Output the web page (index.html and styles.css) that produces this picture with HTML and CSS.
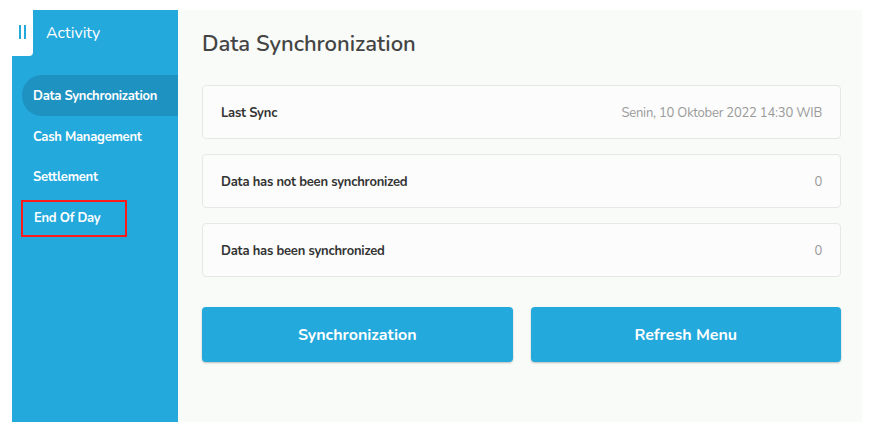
FILE: index.html
```html
<!DOCTYPE html>
<html>
<head>
<meta charset="utf-8">
<link rel="stylesheet" href="styles.css">
</head>
<body>
<div class="app">
  <aside class="sidebar">
    <div class="sidebar-head">
      <div class="toggle"><span class="bars"><i></i><i></i></span></div>
      <div class="brand">Activity</div>
    </div>
    <nav class="menu">
      <div class="item active">Data Synchronization</div>
      <div class="item">Cash Management</div>
      <div class="item">Settlement</div>
      <div class="item"><span class="highlight">End Of Day</span></div>
    </nav>
  </aside>
  <main class="content">
    <h1 class="title">Data Synchronization</h1>
    <div class="cards">
      <div class="card"><span class="label">Last Sync</span><span class="value">Senin, 10 Oktober 2022 14:30 WIB</span></div>
      <div class="card"><span class="label">Data has not been synchronized</span><span class="value">0</span></div>
      <div class="card"><span class="label">Data has been synchronized</span><span class="value">0</span></div>
    </div>
    <div class="actions">
      <button class="btn">Synchronization</button>
      <button class="btn">Refresh Menu</button>
    </div>
  </main>
</div>
</body>
</html>
```

FILE: styles.css
```css
html, body {
  margin: 0;
  padding: 0;
  background: #ffffff;
}
body {
  padding: 10px 23px 13px 12px;
  font-family: "Nunito", "Lato", "Noto Sans", sans-serif;
}
.app {
  display: flex;
  height: 412px;
  background: #f9fbf9;
}
.sidebar {
  width: 166px;
  flex: none;
  background: #23a9dc;
  display: flex;
  flex-direction: column;
}
.sidebar-head {
  display: flex;
  align-items: flex-start;
  height: 46px;
}
.toggle {
  width: 21px;
  height: 46px;
  background: #ffffff;
  border-bottom-right-radius: 4px;
  display: flex;
  align-items: center;
  justify-content: center;
}
.bars {
  display: flex;
  gap: 3px;
  margin-top: -2px;
}
.bars i {
  display: block;
  width: 2px;
  height: 14px;
  background: #23a9dc;
}
.brand {
  color: #ffffff;
  font-size: 16px;
  margin-left: 13px;
  line-height: 46px;
}
.menu {
  display: flex;
  flex-direction: column;
  padding-top: 19px;
  padding-left: 10px;
}
.item {
  height: 40.6px;
  box-sizing: border-box;
  display: flex;
  align-items: center;
  padding: 2px 0 0 11px;
  color: #ffffff;
  font-weight: 700;
  font-size: 13px;
  letter-spacing: -0.25px;
}
.item.active {
  background: #1e93c2;
  border-radius: 20px 0 0 20px;
}
.highlight {
  display: flex;
  align-items: center;
  height: 37px;
  width: 106px;
  margin-left: -12px;
  padding-left: 11px;
  border: 2px solid #ff1a1a;
  box-sizing: border-box;
  margin-top: 0;
}
.content {
  flex: 1;
  padding: 20px 21px 0 24px;
}
.title {
  margin: 0;
  font-size: 22px;
  font-weight: 600;
  color: #444444;
  line-height: 28px;
}
.cards {
  margin-top: 27px;
  display: flex;
  flex-direction: column;
  gap: 15px;
}
.card {
  height: 54px;
  box-sizing: border-box;
  border: 1px solid #e6e8e6;
  border-radius: 4px;
  background: #fbfcfb;
  display: flex;
  align-items: center;
  justify-content: space-between;
  padding: 2px 18px 0 18px;
}
.label {
  font-size: 13px;
  font-weight: 700;
  color: #333333;
  letter-spacing: -0.2px;
}
.value {
  font-size: 13px;
  color: #9a9a9a;
  letter-spacing: -0.2px;
}
.actions {
  margin-top: 30px;
  display: grid;
  grid-template-columns: 1fr 1fr;
  gap: 18px;
}
.btn {
  height: 55px;
  border: none;
  border-radius: 4px;
  background: #23a9dc;
  color: #ffffff;
  font-family: inherit;
  font-size: 16px;
  font-weight: 700;
  padding-top: 2px;
  box-shadow: 0 1px 2px rgba(0,0,0,0.25);
}
```
